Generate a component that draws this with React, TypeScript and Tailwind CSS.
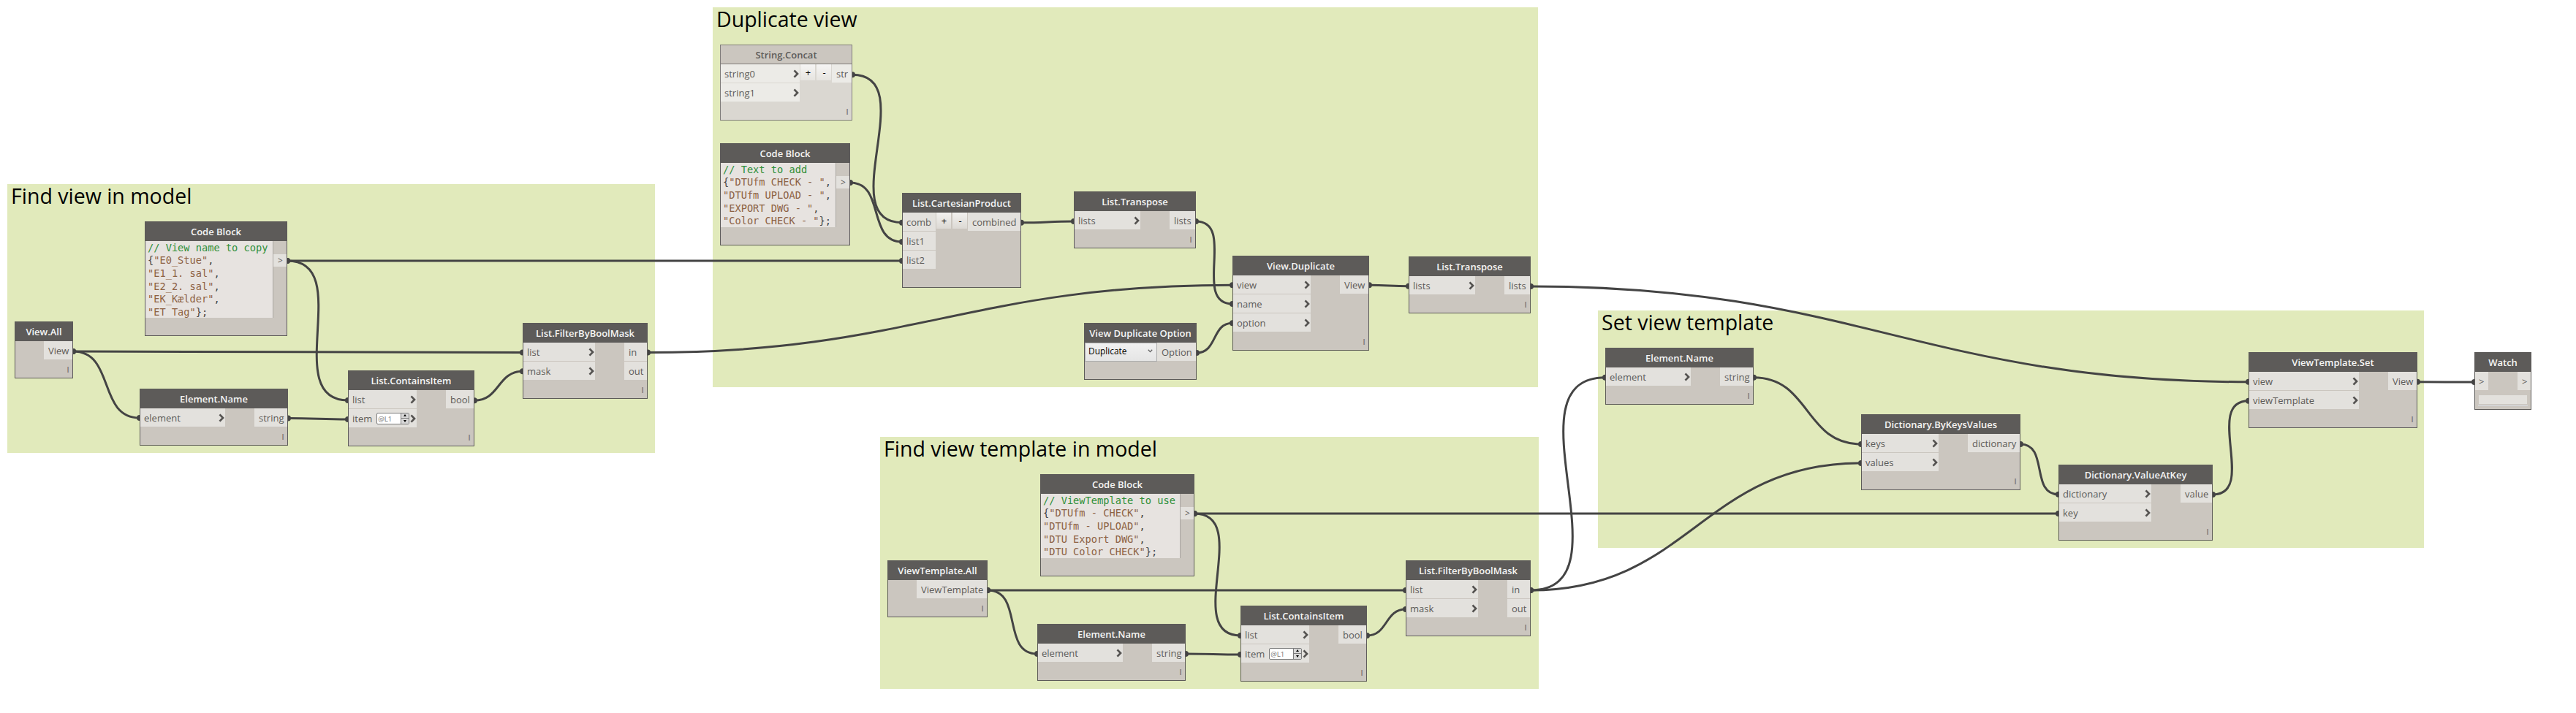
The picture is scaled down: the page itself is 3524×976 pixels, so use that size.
import type { ReactNode } from 'react';

type Wire = [number, number, number, number];

const WIRES: Wire[] = [
  [100, 481.1, 715, 482.4],
  [100, 481.1, 191, 572.1],
  [393, 356.9, 1234, 357],
  [393, 356.9, 476, 548],
  [394, 572.4, 476, 574],
  [649, 548.2, 715, 508.3],
  [886, 482.5, 1686, 390.2],
  [1166, 102.2, 1234, 304.7],
  [1163, 250, 1234, 331],
  [1397, 304.8, 1469, 303],
  [1636, 303.1, 1686, 416],
  [1637, 483, 1686, 442.3],
  [1873, 390.2, 1927, 391.8],
  [2094, 391.9, 3076, 522.8],
  [1351, 808, 1923, 808],
  [1351, 808, 1419, 895],
  [1622, 895, 1697, 896],
  [1634, 703, 1697, 870],
  [1634, 703, 2816, 702.9],
  [1870, 870, 1923, 834],
  [2094, 808, 2196, 516.7],
  [2094, 808, 2546, 634],
  [2399, 516.8, 2546, 608],
  [2764, 608, 2816, 676.8],
  [3027, 677, 3076, 548.8],
  [3307, 522.8, 3385, 523],
];

function wirePath([x0, y0, x1, y1]: Wire) {
  const offset = 0.45 * Math.hypot(x1 - x0, y1 - y0);
  return `M${x0} ${y0}C${x0 + offset} ${y0} ${x1 - offset} ${y1} ${x1} ${y1}`;
}

function Wires() {
  return (
    <svg className="absolute inset-0" width="3524" height="976" fill="none">
      {WIRES.map((w, i) => (
        <g key={i}>
          <path d={wirePath(w)} stroke="#444444" strokeWidth="3" />
          <circle cx={w[0]} cy={w[1]} r="4" fill="#444444" />
          <circle cx={w[2]} cy={w[3]} r="4" fill="#444444" />
        </g>
      ))}
    </svg>
  );
}

function Group({ title, className }: { title: string; className: string }) {
  return (
    <section className={`absolute bg-[#e1eabb] pl-[5px] ${className}`}>
      <h2 className="whitespace-nowrap text-[28.5px] leading-[32px] text-black">{title}</h2>
    </section>
  );
}

function NodeFrame({
  title,
  className,
  light = false,
  children,
}: {
  title: string;
  className: string;
  light?: boolean;
  children: ReactNode;
}) {
  return (
    <article
      className={`absolute flex flex-col border ${
        light ? 'border-[#7f7c79] bg-[#dad7d1]' : 'border-[#5d5b59] bg-[#cbc6bf]'
      } ${className}`}
    >
      <h3
        className={`flex h-[26px] shrink-0 items-center justify-center whitespace-nowrap text-[13px] font-semibold leading-[18px] ${
          light ? 'border-b border-[#7f7c79] bg-[#cbc6bf] pt-px text-[#5d5b59]' : 'bg-[#5d5b59] text-[#f5f5f4]'
        }`}
      >
        {title}
      </h3>
      {children}
    </article>
  );
}

function Chevron() {
  return (
    <svg className="mb-px ml-auto mr-px block shrink-0" width="8" height="12" viewBox="0 0 8 12" fill="none">
      <path d="M1.5 1.4L6 6L1.5 10.6" stroke="#555351" strokeWidth="2.7" />
    </svg>
  );
}

function LevelSpinner() {
  return (
    <span className="mb-px ml-[6px] flex h-4 w-[45px] shrink-0 rounded-[2px] border border-[#7b7b7b] bg-white">
      <span className="flex-1 pl-px text-[9.6px] leading-[16px] text-[#777777]">@L1</span>
      <span className="flex w-[11px] flex-col border-l border-[#7b7b7b] bg-[#d8d8d8]">
        <span className="flex h-[7px] items-center justify-center border-b border-[#7b7b7b]">
          <svg width="4" height="3" viewBox="0 0 4 3"><path d="M2 0L4 3H0Z" fill="#000" /></svg>
        </span>
        <span className="flex h-[7px] items-center justify-center">
          <svg width="4" height="3" viewBox="0 0 4 3"><path d="M2 3L4 0H0Z" fill="#000" /></svg>
        </span>
      </span>
    </span>
  );
}

type PortDef = { name: string; chevron?: boolean; level?: boolean };

function InputPort({ name, chevron = true, level, light }: PortDef & { light?: boolean }) {
  return (
    <li
      className={`flex h-[25px] items-center whitespace-nowrap pl-[5px] pt-px leading-[18px] ${
        light ? 'bg-[#ecebe7]' : 'bg-[#e3e1dd]'
      }`}
    >
      {name}
      {level && <LevelSpinner />}
      {chevron && <Chevron />}
    </li>
  );
}

function OutputPort({ name, light }: { name: string; light?: boolean }) {
  return (
    <li
      className={`flex h-[25px] items-center whitespace-nowrap pl-[6px] pt-px leading-[18px] ${
        light ? 'bg-[#ecebe7]' : 'bg-[#e3e1dd]'
      }`}
    >
      {name}
    </li>
  );
}

function StepButton({ children, light }: { children: string; light?: boolean }) {
  return (
    <button
      className={`flex h-[22px] w-5 items-center justify-center bg-linear-to-b pl-px text-[13px] leading-none text-black ${
        light ? 'from-[#f6f5f4] to-[#e6e4e0]' : 'from-[#f2f1ef] to-[#dcd9d4]'
      }`}
    >
      {children}
    </button>
  );
}

function FunctionNode({
  title,
  className,
  inputs = [],
  inputWidth = '',
  outputs,
  outputWidth,
  variadic = false,
  lacing = true,
  light = false,
}: {
  title: string;
  className: string;
  inputs?: PortDef[];
  inputWidth?: string;
  outputs: string[];
  outputWidth: string;
  variadic?: boolean;
  lacing?: boolean;
  light?: boolean;
}) {
  return (
    <NodeFrame title={title} className={className} light={light}>
      <div className="flex items-start justify-between text-[13px] text-[#5d5b59]">
        <ul className={`flex flex-col gap-px ${inputWidth}`}>
          {inputs.map((p) => (
            <InputPort key={p.name} {...p} light={light} />
          ))}
        </ul>
        {variadic && (
          <div className="flex gap-[2px]">
            <StepButton light={light}>+</StepButton>
            <StepButton light={light}>-</StepButton>
          </div>
        )}
        <ul className={`flex flex-col gap-px ${outputWidth}`}>
          {outputs.map((o) => (
            <OutputPort key={o} name={o} light={light} />
          ))}
        </ul>
      </div>
      {lacing && (
        <div className="flex h-[25px] items-center justify-end pr-[4.5px] pt-[4px] text-[11px] font-semibold text-[#7a7673]">
          l
        </div>
      )}
    </NodeFrame>
  );
}

function CodeNode({
  className,
  editorClass,
  comment,
  lines,
}: {
  className: string;
  editorClass: string;
  comment: string;
  lines: [string, string, string][];
}) {
  return (
    <NodeFrame title="Code Block" className={className}>
      <div className="flex items-start">
        <pre
          className={`shrink-0 overflow-hidden border-r border-[#aaa6a2] bg-[#e7e3e0] pl-[3px] pt-[0.7px] font-['DejaVu_Sans_Mono',monospace] text-[13.67px] leading-[17.66px] text-[#444444] ${editorClass}`}
        >
          <div className="text-[#2f8f38]">{comment}</div>
          {lines.map(([open, text, close]) => (
            <div key={text}>
              {open}
              <span className="text-[#8d6244]">{text}</span>
              {close}
            </div>
          ))}
        </pre>
        <span className="mt-[18px] flex h-[17px] flex-1 items-center bg-[#e3e1dd] pl-[6px] text-[12px] leading-none text-[#5d5b59]">
          &gt;
        </span>
      </div>
    </NodeFrame>
  );
}

export default function App() {
  return (
    <main className="relative h-[976px] w-[3524px] overflow-hidden bg-white font-['Open_Sans',sans-serif]">
      <Group title="Find view in model" className="left-[10px] top-[252px] h-[368px] w-[886px]" />
      <Group title="Duplicate view" className="left-[975px] top-[10px] h-[520px] w-[1129px]" />
      <Group title="Find view template in model" className="left-[1204px] top-[598px] h-[345px] w-[901px]" />
      <Group title="Set view template" className="left-[2186px] top-[425px] h-[325px] w-[1130px]" />

      <Wires />

      <FunctionNode
        title="View.All"
        className="left-[20px] top-[440px] h-[78px] w-[80px]"
        outputs={['View']}
        outputWidth="ml-auto w-[39px]"
      />
      <CodeNode
        className="left-[198px] top-[303px] h-[157px] w-[195px]"
        editorClass="h-[105px] w-[175px]"
        comment="// View name to copy"
        lines={[
          ['{', '"E0_Stue"', ','],
          ['', '"E1_1. sal"', ','],
          ['', '"E2_2. sal"', ','],
          ['', '"EK_Kælder"', ','],
          ['', '"ET_Tag"', '};'],
        ]}
      />
      <FunctionNode
        title="Element.Name"
        className="left-[191px] top-[532px] h-[78px] w-[203px]"
        inputs={[{ name: 'element' }]}
        inputWidth="w-[116px]"
        outputs={['string']}
        outputWidth="w-[45px]"
      />
      <FunctionNode
        title="List.ContainsItem"
        className="left-[476px] top-[507px] h-[104px] w-[173px]"
        inputs={[{ name: 'list' }, { name: 'item', level: true }]}
        inputWidth="w-[93px]"
        outputs={['bool']}
        outputWidth="w-[38px]"
      />
      <FunctionNode
        title="List.FilterByBoolMask"
        className="left-[715px] top-[442px] h-[104px] w-[171px]"
        inputs={[{ name: 'list' }, { name: 'mask' }]}
        inputWidth="w-[98px]"
        outputs={['in', 'out']}
        outputWidth="w-[31px]"
      />

      <FunctionNode
        light
        variadic
        title="String.Concat"
        className="left-[985px] top-[61px] h-[104px] w-[181px]"
        inputs={[{ name: 'string0' }, { name: 'string1' }]}
        inputWidth="w-[108px]"
        outputs={['str']}
        outputWidth="w-[27px]"
      />
      <CodeNode
        className="left-[985px] top-[196px] h-[140px] w-[178px]"
        editorClass="h-[88px] w-[158px]"
        comment="// Text to add"
        lines={[
          ['{', '"DTUfm CHECK - "', ','],
          ['', '"DTUfm UPLOAD - "', ','],
          ['', '"EXPORT DWG - "', ','],
          ['', '"Color CHECK - "', '};'],
        ]}
      />
      <FunctionNode
        variadic
        lacing={false}
        title="List.CartesianProduct"
        className="left-[1234px] top-[264px] h-[130px] w-[163px]"
        inputs={[
          { name: 'comb', chevron: false },
          { name: 'list1', chevron: false },
          { name: 'list2', chevron: false },
        ]}
        inputWidth="w-[45px]"
        outputs={['combined']}
        outputWidth="w-[72px]"
      />
      <FunctionNode
        title="List.Transpose"
        className="left-[1469px] top-[262px] h-[78px] w-[167px]"
        inputs={[{ name: 'lists' }]}
        inputWidth="w-[90px]"
        outputs={['lists']}
        outputWidth="w-[35px]"
      />
      <FunctionNode
        title="View.Duplicate"
        className="left-[1686px] top-[350px] h-[130px] w-[187px]"
        inputs={[{ name: 'view' }, { name: 'name' }, { name: 'option' }]}
        inputWidth="w-[106px]"
        outputs={['View']}
        outputWidth="w-[39px]"
      />
      <NodeFrame title="View Duplicate Option" className="left-[1483px] top-[442px] h-[78px] w-[154px]">
        <div className="flex items-start">
          <div className="flex h-[26px] w-[99px] items-center justify-between border border-[#acacac] bg-linear-to-b from-[#f1f1f1] to-[#e5e5e5] pb-[3px] pl-1 pr-[5px] text-[11.9px] text-black">
            Duplicate
            <svg width="7" height="5" viewBox="0 0 7 5" fill="none">
              <path d="M0.8 0.8L3.5 3.6L6.2 0.8" stroke="#606060" strokeWidth="1.3" />
            </svg>
          </div>
          <ul className="flex-1 text-[13px] text-[#5d5b59]">
            <OutputPort name="Option" />
          </ul>
        </div>
      </NodeFrame>
      <FunctionNode
        title="List.Transpose"
        className="left-[1927px] top-[351px] h-[78px] w-[167px]"
        inputs={[{ name: 'lists' }]}
        inputWidth="w-[90px]"
        outputs={['lists']}
        outputWidth="w-[35px]"
      />

      <FunctionNode
        title="ViewTemplate.All"
        className="left-[1214px] top-[767px] h-[78px] w-[137px]"
        outputs={['ViewTemplate']}
        outputWidth="ml-auto w-[96px]"
      />
      <CodeNode
        className="left-[1423px] top-[649px] h-[140px] w-[211px]"
        editorClass="h-[88px] w-[191px]"
        comment="// ViewTemplate to use"
        lines={[
          ['{', '"DTUfm - CHECK"', ','],
          ['', '"DTUfm - UPLOAD"', ','],
          ['', '"DTU Export DWG"', ','],
          ['', '"DTU Color CHECK"', '};'],
        ]}
      />
      <FunctionNode
        title="Element.Name"
        className="left-[1419px] top-[854px] h-[78px] w-[203px]"
        inputs={[{ name: 'element' }]}
        inputWidth="w-[116px]"
        outputs={['string']}
        outputWidth="w-[45px]"
      />
      <FunctionNode
        title="List.ContainsItem"
        className="left-[1697px] top-[829px] h-[104px] w-[173px]"
        inputs={[{ name: 'list' }, { name: 'item', level: true }]}
        inputWidth="w-[93px]"
        outputs={['bool']}
        outputWidth="w-[38px]"
      />
      <FunctionNode
        title="List.FilterByBoolMask"
        className="left-[1923px] top-[767px] h-[104px] w-[171px]"
        inputs={[{ name: 'list' }, { name: 'mask' }]}
        inputWidth="w-[98px]"
        outputs={['in', 'out']}
        outputWidth="w-[31px]"
      />

      <FunctionNode
        title="Element.Name"
        className="left-[2196px] top-[476px] h-[78px] w-[203px]"
        inputs={[{ name: 'element' }]}
        inputWidth="w-[116px]"
        outputs={['string']}
        outputWidth="w-[45px]"
      />
      <FunctionNode
        title="Dictionary.ByKeysValues"
        className="left-[2546px] top-[567px] h-[104px] w-[218px]"
        inputs={[{ name: 'keys' }, { name: 'values' }]}
        inputWidth="w-[105px]"
        outputs={['dictionary']}
        outputWidth="w-[71px]"
      />
      <FunctionNode
        title="Dictionary.ValueAtKey"
        className="left-[2816px] top-[636px] h-[104px] w-[211px]"
        inputs={[{ name: 'dictionary' }, { name: 'key' }]}
        inputWidth="w-[126px]"
        outputs={['value']}
        outputWidth="w-[43px]"
      />
      <FunctionNode
        title="ViewTemplate.Set"
        className="left-[3076px] top-[482px] h-[104px] w-[231px]"
        inputs={[{ name: 'view' }, { name: 'viewTemplate' }]}
        inputWidth="w-[150px]"
        outputs={['View']}
        outputWidth="w-[39px]"
      />
      <NodeFrame title="Watch" className="left-[3385px] top-[482px] h-[79px] w-[78px]">
        <div className="flex justify-between text-[13px] leading-[18px] text-[#5d5b59]">
          <span className="flex h-[25px] w-[18px] items-center bg-[#e3e1dd] pl-[5px]">&gt;</span>
          <span className="flex h-[25px] w-[18px] items-center bg-[#e3e1dd] pl-[6px]">&gt;</span>
        </div>
        <div className="mx-[5px] mt-[7px] h-3 bg-[#e3e1dd]" />
        <div className="mx-1 mt-px h-[2px] bg-[#d3d3d4]" />
      </NodeFrame>
    </main>
  );
}
